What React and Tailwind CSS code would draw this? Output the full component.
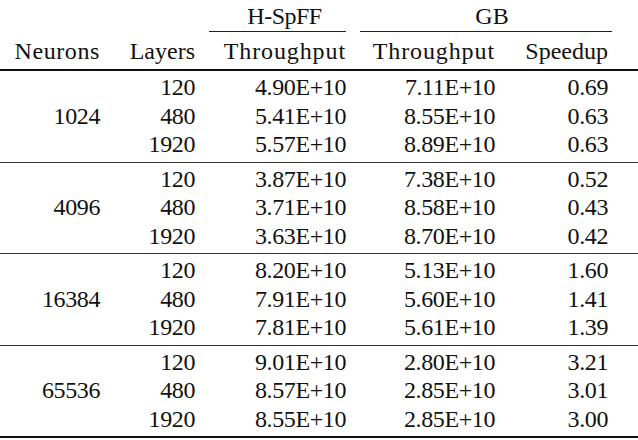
import React from "react";

const groups = [
  {
    neurons: "1024",
    rows: [
      ["120", "4.90E+10", "7.11E+10", "0.69"],
      ["480", "5.41E+10", "8.55E+10", "0.63"],
      ["1920", "5.57E+10", "8.89E+10", "0.63"],
    ],
  },
  {
    neurons: "4096",
    rows: [
      ["120", "3.87E+10", "7.38E+10", "0.52"],
      ["480", "3.71E+10", "8.58E+10", "0.43"],
      ["1920", "3.63E+10", "8.70E+10", "0.42"],
    ],
  },
  {
    neurons: "16384",
    rows: [
      ["120", "8.20E+10", "5.13E+10", "1.60"],
      ["480", "7.91E+10", "5.60E+10", "1.41"],
      ["1920", "7.81E+10", "5.61E+10", "1.39"],
    ],
  },
  {
    neurons: "65536",
    rows: [
      ["120", "9.01E+10", "2.80E+10", "3.21"],
      ["480", "8.57E+10", "2.85E+10", "3.01"],
      ["1920", "8.55E+10", "2.85E+10", "3.00"],
    ],
  },
];

const cols = "grid grid-cols-[100px_95px_151px_149px_113px]";

export default function App() {
  return (
    <div className="w-[638px] h-[440px] bg-white text-[#111] [font-family:Liberation_Serif,serif] text-[24px] leading-none overflow-hidden">
      {/* group headers */}
      <div className="grid grid-cols-[100px_95px_151px_266px] h-[32px]">
        <div />
        <div />
        <div className="pl-[14px]">
          <div className="h-[32px] flex items-center justify-center pl-[14px] tracking-[-0.5px] border-b border-[#222]">
            H-SpFF
          </div>
        </div>
        <div className="pl-[14px]">
          <div className="h-[32px] flex items-center justify-center pl-[12px] border-b border-[#222]">
            GB
          </div>
        </div>
      </div>

      {/* column headers */}
      <div className={`${cols} h-[37px] items-center text-right`}>
        <div className="tracking-[0.6px]">Neurons</div>
        <div>Layers</div>
        <div className="tracking-[0.9px]">Throughput</div>
        <div className="tracking-[0.9px]">Throughput</div>
        <div>Speedup</div>
      </div>
      <div className="h-[2px] bg-[#111]" />

      {groups.map((g, gi) => (
        <div key={gi}>
          <div className="pt-[2px] pb-[3px]">
            {g.rows.map((r, ri) => (
              <div key={ri} className={`${cols} h-[28.5px] items-center text-right tracking-[-0.4px]`}>
                <div>{ri === 1 ? g.neurons : ""}</div>
                <div>{r[0]}</div>
                <div>{r[1]}</div>
                <div>{r[2]}</div>
                <div>{r[3]}</div>
              </div>
            ))}
          </div>
          <div className={gi === groups.length - 1 ? "h-[2px] bg-[#111]" : "h-px bg-[#333]"} />
        </div>
      ))}
    </div>
  );
}
